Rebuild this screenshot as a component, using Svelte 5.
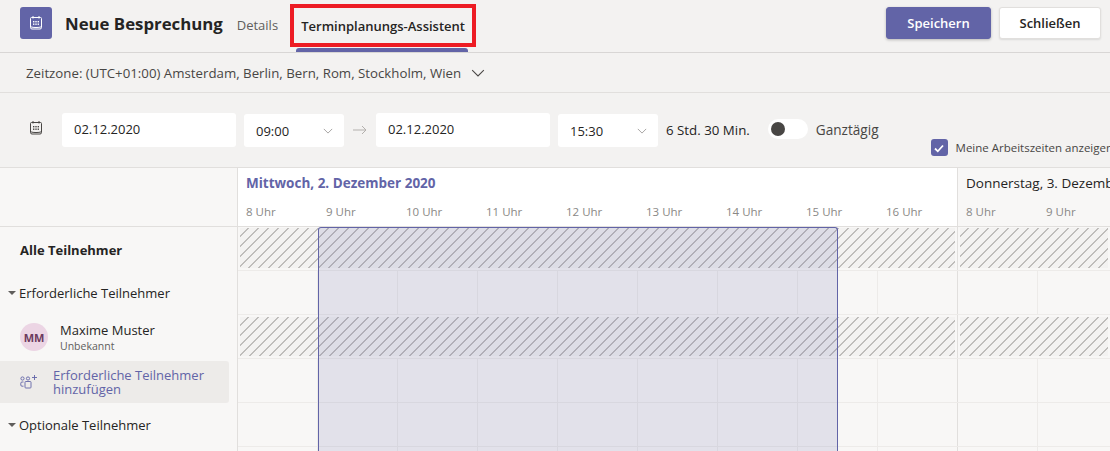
<script lang="ts">
	const hours = [8, 9, 10, 11, 12, 13, 14, 15, 16];
	const nextHours = [8, 9, 10, 11];
	const rows = [true, false, true, false, false, false];
</script>

{#snippet calendar(size: number)}
	<svg width={size} height={size} viewBox="0 0 16 16" fill="none" stroke="currentColor" stroke-width="1">
		<path d="M2.5 3.5a1 1 0 0 1 1-1h9a1 1 0 0 1 1 1v9a1.5 1.5 0 0 1-1.5 1.5H4a1.5 1.5 0 0 1-1.5-1.5z" />
		<path d="M5 1v2.5M11 1v2.5M2.5 11.8c3 1 8 1 11 0" />
		<g fill="currentColor" stroke="none">
			<rect x="5" y="6" width="1.4" height="1.4" /><rect x="7.3" y="6" width="1.4" height="1.4" /><rect x="9.6" y="6" width="1.4" height="1.4" />
			<rect x="5" y="8.5" width="1.4" height="1.4" /><rect x="7.3" y="8.5" width="1.4" height="1.4" /><rect x="9.6" y="8.5" width="1.4" height="1.4" />
		</g>
	</svg>
{/snippet}

{#snippet chevron(size: number)}
	<svg width={size} height={size} viewBox="0 0 12 12" fill="none" stroke="currentColor" stroke-width="0.9"><path d="M1 3.5l5 5 5-5" /></svg>
{/snippet}

<div class="page">
	<header class="topbar">
		<div class="app-icon">{@render calendar(16)}</div>
		<h1>Neue Besprechung</h1>
		<span class="tab">Details</span>
		<div class="tab-active">
			<span class="tab-label">Terminplanungs-Assistent</span>
			<span class="tab-line"></span>
		</div>
		<div class="actions">
			<button class="btn primary">Speichern</button>
			<button class="btn">Schließen</button>
		</div>
	</header>

	<div class="zone">
		<span>Zeitzone: (UTC+01:00) Amsterdam, Berlin, Bern, Rom, Stockholm, Wien</span>
		<span class="zone-chevron">{@render chevron(14)}</span>
	</div>

	<div class="when">
		<span class="when-icon">{@render calendar(16)}</span>
		<div class="field date">02.12.2020</div>
		<div class="field time">09:00 <span class="field-chevron">{@render chevron(10)}</span></div>
		<svg class="arrow" width="14" height="10" viewBox="0 0 14 10" fill="none" stroke="#b3b0ad"><path d="M0 5h13M9 1l4 4-4 4" /></svg>
		<div class="field date">02.12.2020</div>
		<div class="field time">15:30 <span class="field-chevron">{@render chevron(10)}</span></div>
		<span class="duration">6 Std. 30 Min.</span>
		<span class="toggle"><span class="knob"></span></span>
		<span class="allday">Ganztägig</span>
		<div class="workhours">
			<span class="check">
				<svg width="12" height="12" viewBox="0 0 12 12" fill="none" stroke="#fff" stroke-width="1.8"><path d="M2 6.5l2.8 2.8L10 3.5" /></svg>
			</span>
			<span>Meine Arbeitszeiten anzeigen</span>
		</div>
	</div>

	<div class="scheduler">
		<aside class="people">
			<div class="people-head"></div>
			<div class="all">Alle Teilnehmer</div>
			<div class="group"><span class="caret"></span>Erforderliche Teilnehmer</div>
			<div class="person">
				<span class="avatar">MM</span>
				<div class="person-info">
					<div class="person-name">Maxime Muster</div>
					<div class="person-status">Unbekannt</div>
				</div>
			</div>
			<div class="add">
				<svg width="18" height="16" viewBox="0 0 18 16" fill="none" stroke="#6264a7" stroke-width="0.9">
					<circle cx="2.5" cy="4.5" r="1.6" /><circle cx="8" cy="4.5" r="1.6" />
					<path d="M3.5 8H2a1.2 1.2 0 0 0-1.2 1.2V11A1.2 1.2 0 0 0 2 12.2h1.5" />
					<rect x="5" y="7.5" width="6" height="6.5" rx="0.8" />
					<path d="M14.5 1v5M12 3.5h5" />
				</svg>
				<span>Erforderliche Teilnehmer hinzufügen</span>
			</div>
			<div class="group"><span class="caret"></span>Optionale Teilnehmer</div>
		</aside>

		<div class="timeline">
			<div class="days">
				<div class="day current">
					<div class="day-title">Mittwoch, 2. Dezember 2020</div>
					<div class="day-hours">
						{#each hours as h}<span>{h} Uhr</span>{/each}
					</div>
				</div>
				<div class="day">
					<div class="day-title">Donnerstag, 3. Dezember 2020</div>
					<div class="day-hours">
						{#each nextHours as h}<span>{h} Uhr</span>{/each}
					</div>
				</div>
			</div>
			{#each rows as busy, i}
				<div class="row">
					<div class="cells current-cells" class:busy class:first={i === 0}>
						{#each hours as h}<span class="cell"></span>{/each}
					</div>
					<div class="cells" class:busy class:first={i === 0}>
						{#each nextHours as h}<span class="cell"></span>{/each}
					</div>
				</div>
			{/each}
			<div class="selection"></div>
		</div>
	</div>
</div>

<style>
	:global(body) {
		margin: 0;
		background: #f3f2f1;
	}

	.page {
		width: 1110px;
		height: 451px;
		overflow: hidden;
		font-family: "Open Sans", "Noto Sans", sans-serif;
		font-size: 13px;
		color: #252423;
		background: #f3f2f1;
	}

	.topbar {
		height: 52px;
		display: flex;
		align-items: flex-start;
		padding-left: 20px;
		border-bottom: 1px solid #d8d6d5;
		box-sizing: content-box;
	}

	.app-icon {
		width: 32px;
		height: 32px;
		margin-top: 7px;
		border-radius: 3px;
		background: #6264a7;
		color: #fff;
		display: flex;
		align-items: center;
		justify-content: center;
	}

	h1 {
		margin: 12px 0 0 13px;
		font-size: 16.8px;
		line-height: 24px;
		font-weight: 700;
	}

	.tab {
		margin: 16px 0 0 14px;
		line-height: 18px;
		color: #605e5c;
	}

	.tab-active {
		position: relative;
		margin: 4px 0 0 12px;
		width: 186px;
		height: 43px;
		box-sizing: border-box;
		border: 4.5px solid #ed1c24;
		display: flex;
		align-items: center;
		justify-content: center;
		font-weight: 600;
		font-size: 13px;
	}

	.tab-line {
		position: absolute;
		left: 1.5px;
		right: 4.5px;
		top: 40px;
		height: 4px;
		background: #6264a7;
		border-radius: 3px 3px 0 0;
	}

	.actions {
		margin: 7px 9px 0 auto;
		display: flex;
		gap: 8px;
	}

	.btn {
		height: 32px;
		width: 102px;
		padding: 0;
		border: 1px solid #e1dfdd;
		border-radius: 3px;
		background: #fff;
		color: #252423;
		font: 600 13px "Open Sans", sans-serif;
		box-shadow: 0 1px 2px rgba(0, 0, 0, 0.1);
	}

	.primary {
		width: 105px;
		background: #6264a7;
		border-color: #6264a7;
		color: #fff;
		box-shadow: 0 1px 3px rgba(0, 0, 0, 0.25);
	}

	.zone {
		height: 39px;
		padding-left: 26px;
		display: flex;
		align-items: center;
		gap: 10px;
		border-bottom: 1px solid #e1dfdd;
		color: #484644;
		font-size: 13.27px;
	}

	.zone-chevron {
		display: flex;
	}

	.when {
		height: 74px;
		display: flex;
		align-items: flex-start;
		padding-left: 28px;
		border-bottom: 1px solid #e1dfdd;
	}

	.when > * {
		flex: none;
	}

	.when-icon {
		margin: 27px 18px 0 0;
		display: flex;
		color: #484644;
	}

	.field {
		height: 34px;
		margin-top: 20px;
		display: flex;
		align-items: center;
		padding-left: 12px;
		box-sizing: border-box;
		background: #fff;
		border-radius: 3px;
	}

	.date {
		width: 174px;
		padding-bottom: 2px;
	}

	.time {
		width: 100px;
		height: 33px;
		margin-top: 21px;
		margin-left: 8px;
		margin-right: 8px;
		padding-right: 11px;
		justify-content: space-between;
	}

	.field-chevron {
		display: flex;
		color: #8a8886;
	}

	.arrow {
		margin: 32px 9px 0 1px;
	}

	.duration {
		margin: 28px 0 0 0;
		line-height: 18px;
		font-size: 13.3px;
		white-space: nowrap;
	}

	.toggle {
		width: 40px;
		height: 20px;
		margin: 26px 8px 0 18px;
		border-radius: 10px;
		background: #fff;
		display: flex;
		align-items: center;
		padding-left: 3px;
		box-sizing: border-box;
	}

	.knob {
		width: 14px;
		height: 14px;
		border-radius: 50%;
		background: #484644;
	}

	.allday {
		margin-top: 28px;
		line-height: 18px;
		color: #484644;
		font-size: 13.6px;
	}

	.workhours {
		margin: 46px 0 0 52px;
		display: flex;
		align-items: center;
		gap: 8px;
		font-size: 11.5px;
		color: #484644;
		white-space: nowrap;
	}

	.check {
		width: 17px;
		height: 17px;
		border-radius: 3px;
		background: #6264a7;
		display: flex;
		align-items: center;
		justify-content: center;
	}

	.scheduler {
		display: flex;
		background: #f8f7f6;
	}

	.people {
		width: 237px;
		flex: none;
		border-right: 1px solid #e1dfdd;
	}

	.people-head {
		height: 58px;
		border-bottom: 1px solid #e1dfdd;
	}

	.all {
		height: 44px;
		box-sizing: border-box;
		padding: 2px 0 0 20px;
		display: flex;
		align-items: center;
		font-weight: 700;
	}

	.group {
		height: 44px;
		display: flex;
		align-items: center;
		padding-left: 8px;
		gap: 3px;
	}

	.caret {
		width: 0;
		height: 0;
		border: 4px solid transparent;
		border-top: 4px solid #605e5c;
		border-bottom: 0;
	}

	.person {
		height: 44px;
		display: flex;
		align-items: center;
		padding-left: 20px;
		gap: 12px;
	}

	.avatar {
		width: 28px;
		height: 28px;
		border-radius: 50%;
		background: #ecd5e4;
		color: #6d3b5e;
		font-size: 11px;
		font-weight: 700;
		display: flex;
		align-items: center;
		justify-content: center;
	}

	.person-info {
		padding-bottom: 2px;
	}

	.person-name {
		line-height: 20px;
	}

	.person-status {
		font-size: 10.5px;
		line-height: 13px;
		color: #605e5c;
	}

	.add {
		width: 229px;
		height: 42px;
		box-sizing: border-box;
		margin-top: 2px;
		padding-left: 20px;
		display: flex;
		align-items: center;
		gap: 15px;
		background: #edebe9;
		border-radius: 0 3px 3px 0;
		color: #6264a7;
		line-height: 14px;
	}

	.add svg {
		flex: none;
	}

	.timeline {
		position: relative;
		flex: 1;
		min-width: 0;
		overflow: hidden;
	}

	.days {
		display: flex;
		height: 58px;
		border-bottom: 1px solid #e1dfdd;
	}

	.day {
		flex: 1;
		padding: 6px 0 0 8px;
		white-space: nowrap;
		overflow: hidden;
	}

	.day.current {
		flex: none;
		width: 720px;
		box-sizing: border-box;
		background: #fff;
		border-right: 1px solid #e1dfdd;
	}

	.day-title {
		line-height: 18px;
		font-size: 13.5px;
	}

	.current .day-title {
		font-weight: 700;
		color: #6264a7;
	}

	.day-hours {
		display: flex;
		margin-top: 12px;
		font-size: 11.5px;
		line-height: 16px;
		color: #8a8886;
	}

	.day-hours span {
		flex: none;
		width: 80px;
	}

	.row {
		display: flex;
		height: 44px;
		box-sizing: border-box;
		border-bottom: 1px solid #edebe9;
	}

	.cells {
		position: relative;
		flex: 1;
		display: flex;
		overflow: hidden;
	}

	.current-cells {
		flex: none;
		width: 720px;
		box-sizing: border-box;
		border-right: 1px solid #e1dfdd;
	}

	.cell {
		flex: none;
		width: 80px;
		box-sizing: border-box;
		border-right: 1px solid #edebe9;
	}

	.busy .cell {
		border-right: 0;
	}

	.busy::before {
		content: "";
		position: absolute;
		inset: 2px;
		background: repeating-linear-gradient(135deg, #f3f2f1 0 5.2px, #bfbdbb 5.2px 7.07px);
	}

	.first::before {
		top: 1px;
	}

	.selection {
		position: absolute;
		left: 80px;
		top: 59px;
		width: 520px;
		bottom: 0;
		box-sizing: border-box;
		border: 1px solid #6264a7;
		border-bottom: 0;
		border-radius: 3px 3px 0 0;
		background: rgba(98, 100, 167, 0.15);
	}
</style>
